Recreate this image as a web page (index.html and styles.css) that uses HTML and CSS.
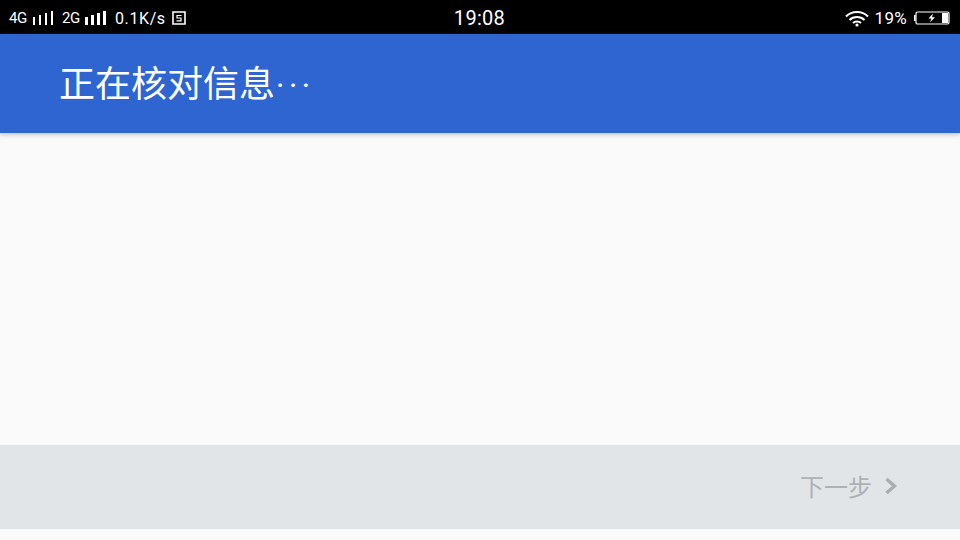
FILE: index.html
```html
<!DOCTYPE html>
<html lang="zh-CN">

<head>
  <meta charset="UTF-8">
  <title>正在核对信息</title>
  <link rel="stylesheet" href="styles.css">
</head>

<body>
  <div class="status-bar">
    <div class="status-left">
      <span class="net">4G</span>
      <svg class="signal" viewBox="0 0 20 16" width="20" height="16">
        <rect x="0" y="7" width="2" height="8" />
        <rect x="6" y="5" width="2" height="10" />
        <rect x="12" y="3" width="2" height="12" />
        <rect x="18" y="1" width="2" height="14" />
      </svg>
      <span class="net net-second">2G</span>
      <svg class="signal" viewBox="0 0 21 16" width="21" height="16">
        <rect x="0" y="7" width="3" height="8" />
        <rect x="6" y="5" width="3" height="10" />
        <rect x="12" y="3" width="3" height="12" />
        <rect x="18" y="1" width="3" height="14" />
      </svg>
      <span class="speed">0.1K/s</span>
      <svg class="sim" viewBox="0 0 14 14" width="14" height="14">
        <path d="M1 1H13V13H1Z" fill="none" stroke="#fff" stroke-width="1.6" />
        <path d="M9.500 4.500H5V7H9V9.800H4.500" fill="none" stroke="#fff" stroke-width="1.200" />
      </svg>
    </div>
    <div class="clock">19:08</div>
    <div class="status-right">
      <svg class="wifi" viewBox="0 0 24 17" width="24" height="17">
        <path d="M1 6.500C7 0.500 17 0.500 23 6.500" fill="none" stroke="#fff" stroke-width="2" />
        <path d="M4.500 10C8.500 6 15.500 6 19.500 10" fill="none" stroke="#fff" stroke-width="2" />
        <path d="M8 13C10 11 14 11 16 13" fill="none" stroke="#fff" stroke-width="2" />
        <circle cx="12" cy="15" r="1.600" fill="#fff" />
      </svg>
      <span class="percent">19%</span>
      <svg class="battery" viewBox="0 0 36 14" width="36" height="14">
        <rect x="0" y="4" width="1.500" height="6" fill="#fff" />
        <rect x="2" y="1" width="33" height="12" rx="1.500" fill="none" stroke="#fff" stroke-width="1.200" />
        <rect x="28" y="2" width="6" height="10" fill="#fff" />
        <path d="M19 2.500L14.500 7.500H17.500L16 11.500L21 6.300H18Z" fill="#fff" />
      </svg>
    </div>
  </div>

  <header class="app-bar">
    <h1 class="title">正在核对信息<span class="dots">···</span></h1>
  </header>

  <main class="content"></main>

  <footer class="nav-bar">
    <button class="next-btn">
      <span>下一步</span>
      <svg class="chevron" viewBox="0 0 14 18" width="14" height="18">
        <path d="M2.500 2L10.500 9L2.500 16" fill="none" stroke="#a9adb0" stroke-width="3.400" />
      </svg>
    </button>
  </footer>

  <div class="bottom-strip"></div>
</body>

</html>
```

FILE: styles.css
```css
/* Base Styles */
html,
body {
  margin: 0;
  padding: 0;
}

body {
  width: 960px;
  height: 540px;
  overflow: hidden;
  display: flex;
  flex-direction: column;
  background: #fafafa;
  font-family: "Roboto", "Noto Sans CJK SC", sans-serif;
}

/* Status Bar */
.status-bar {
  height: 34px;
  flex-shrink: 0;
  background: #000;
  color: #fff;
  display: grid;
  grid-template-columns: 1fr auto 1fr;
  align-items: center;
  padding: 2px 10px 0 9px;
  box-sizing: border-box;
}

.status-left {
  display: flex;
  align-items: center;
}

.status-right {
  display: flex;
  align-items: center;
  justify-content: flex-end;
}

.signal {
  fill: #fff;
}

.net {
  font-size: 15px;
  letter-spacing: -0.5px;
  margin-right: 6px;
  width: 18px;
}

.net-second {
  margin-left: 9px;
  margin-right: 5px;
}

.speed {
  font-size: 16px;
  margin-left: 9px;
  letter-spacing: 0.6px;
}

.sim {
  margin-left: 6px;
}

.clock {
  font-size: 20px;
  letter-spacing: 0.3px;
}

.wifi {
  margin-right: 3px;
}

.percent {
  font-size: 17px;
  letter-spacing: 0.3px;
  margin-left: 3px;
  margin-right: 7px;
}

/* App Bar */
.app-bar {
  height: 99px;
  flex-shrink: 0;
  background: #2e65d1;
  box-shadow: 0 1px 5px rgba(60, 64, 67, 0.4);
  display: flex;
  align-items: center;
  padding: 0 0 2px 59px;
  box-sizing: border-box;
  position: relative;
}

.title {
  margin: 0;
  color: #fff;
  font-size: 36px;
  font-weight: 400;
  line-height: 1;
  font-family: "Noto Sans CJK SC", sans-serif;
}

.dots {
  font-family: "Roboto", sans-serif;
  font-size: 32px;
  letter-spacing: 4.5px;
  margin-left: 1px;
}

/* Content */
.content {
  flex: 1;
}

/* Bottom Navigation */
.nav-bar {
  height: 84px;
  flex-shrink: 0;
  background: #e1e5e8;
  display: flex;
  align-items: center;
  justify-content: flex-end;
  padding: 0 62px 4px 0;
  box-sizing: border-box;
}

.next-btn {
  display: flex;
  align-items: center;
  gap: 12px;
  padding: 0;
  background: none;
  border: none;
  color: #aeb1b4;
  font-size: 24px;
  font-weight: 400;
  font-family: "Noto Sans CJK SC", sans-serif;
}

.chevron {
  margin-top: 2px;
}

.bottom-strip {
  height: 11px;
  flex-shrink: 0;
  background: #fafafa;
}
```
